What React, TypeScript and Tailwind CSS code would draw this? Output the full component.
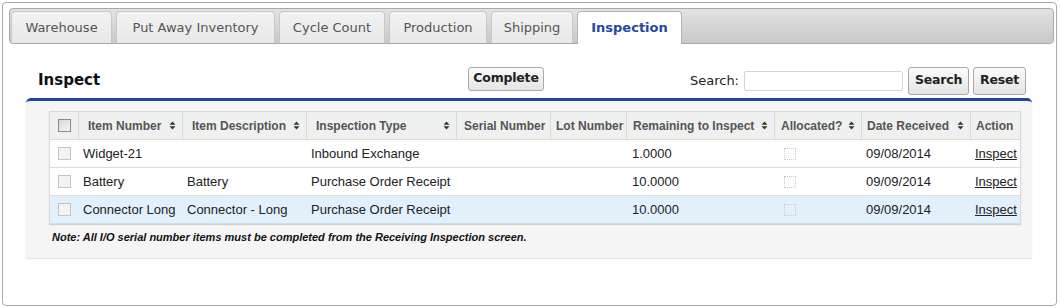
const tabs = [
  { label: "Warehouse", w: "w-[101px]" },
  { label: "Put Away Inventory", w: "w-[159px]" },
  { label: "Cycle Count", w: "w-[106px]" },
  { label: "Production", w: "w-[98px]" },
  { label: "Shipping", w: "w-[82px]" },
  { label: "Inspection", w: "w-[105px]", active: true },
];

const cols = [
  { label: "", w: "w-[29px]", pl: "" },
  { label: "Item Number", w: "w-[104px]", pl: "pl-[9px]", sort: true },
  { label: "Item Description", w: "w-[124px]", pl: "pl-[9px]", sort: true },
  { label: "Inspection Type", w: "w-[150px]", pl: "pl-[9px]", sort: true },
  { label: "Serial Number", w: "w-[94px]", pl: "pl-[7px]" },
  { label: "Lot Number", w: "w-[76px]", pl: "pl-[5px]" },
  { label: "Remaining to Inspect", w: "w-[148px]", pl: "pl-[6px]", sort: true },
  { label: "Allocated?", w: "w-[87px]", pl: "pl-[6px]", sort: true },
  { label: "Date Received", w: "w-[109px]", pl: "pl-[5px]", sort: true },
  { label: "Action", w: "w-[51px]", pl: "pl-[5px]" },
];

const rows = [
  { item: "Widget-21", desc: "", type: "Inbound Exchange", remaining: "1.0000", date: "09/08/2014" },
  { item: "Battery", desc: "Battery", type: "Purchase Order Receipt", remaining: "10.0000", date: "09/09/2014" },
  { item: "Connector Long", desc: "Connector - Long", type: "Purchase Order Receipt", remaining: "10.0000", date: "09/09/2014", hi: true },
];

function SortIcon() {
  return (
    <svg width="7" height="9" viewBox="0 0 7 9" className="shrink-0">
      <path d="M3.5 0.5 L6.5 3.8 L0.5 3.8 Z" fill="#333" />
      <path d="M3.5 8.5 L6.5 5.2 L0.5 5.2 Z" fill="#333" />
    </svg>
  );
}

function Check({ head }: { head?: boolean }) {
  return (
    <div
      className={
        head
          ? "w-[13px] h-[13px] border border-[#8a8a8a] bg-gradient-to-br from-[#d8d8d8] to-[#f6f6f6]"
          : "w-[13px] h-[13px] border border-[#c4c4c4] bg-[#f3f3f3]"
      }
    />
  );
}

function Btn({ children, w }: { children: string; w: string }) {
  return (
    <button
      className={`${w} h-[28px] border border-[#a9a9a9] rounded-[3px] bg-gradient-to-b from-[#fbfbfb] to-[#e4e4e4] text-[12.5px] font-bold text-[#222] tracking-[-0.2px]`}
    >
      {children}
    </button>
  );
}

export default function App() {
  return (
    <div className="w-[1060px] h-[308px] bg-white pt-[2px] pl-[2px] font-['DejaVu_Sans',sans-serif]">
      <div className="w-[1055px] h-[304px] border border-[#aaaaaa] rounded-[4px] pt-[5px] pl-[6px] pr-[2px]">
        {/* tab bar */}
        <div className="w-[1045px] h-[36px] border border-[#a9a9a9] rounded-[4px] bg-gradient-to-b from-[#e3e3e3] to-[#c8c8c8] flex items-end gap-[4px] pl-[1px]">
          {tabs.map((t) =>
            t.active ? (
              <div
                key={t.label}
                className={`${t.w} h-[33px] -mb-[1px] rounded-t-[4px] border border-b-0 border-[#b5b5b5] bg-white flex items-center justify-center text-[13px] font-bold text-[#2447a3]`}
              >
                {t.label}
              </div>
            ) : (
              <div
                key={t.label}
                className={`${t.w} h-[32px] rounded-t-[4px] border border-b-0 border-[#c9c9c9] bg-gradient-to-b from-[#f2f2f2] to-[#e8e8e8] flex items-center justify-center text-[13px] text-[#555]`}
              >
                {t.label}
              </div>
            )
          )}
        </div>

        {/* header row */}
        <div className="ml-[17px] w-[1006px] h-[32px] mt-[20px] mb-[2px] flex items-center">
          <div className="w-[442px] pl-[12px] text-[15px] font-bold text-[#111]">Inspect</div>
          <button className="w-[76px] h-[24px] -mt-[3px] border border-[#a9a9a9] rounded-[3px] bg-gradient-to-b from-[#fbfbfb] to-[#e4e4e4] text-[12.5px] font-bold text-[#222] tracking-[-0.2px]">
            Complete
          </button>
          <div className="ml-auto flex items-center gap-[4px] pr-[6px] mt-[1px]">
            <span className="text-[13px] text-[#222] mr-[1px]">Search:</span>
            <div className="w-[159px] h-[20px] border border-[#d4d4d4] bg-white rounded-[2px] mr-[1px]" />
            <Btn w="w-[61px]">Search</Btn>
            <Btn w="w-[53px]">Reset</Btn>
          </div>
        </div>

        {/* panel */}
        <div className="ml-[17px] w-[1006px] h-[160px] rounded-t-[5px] border-t-[3px] border-[#2146a6] bg-[#f5f5f5] shadow-[0_1px_1px_rgba(0,0,0,0.12)] pt-[10px] pl-[23px] font-['Liberation_Sans',Arial,sans-serif]">
          <div className="w-[972px] border border-[#dadada] border-b-0 shadow-[0_1px_1px_rgba(0,0,0,0.15)]">
            <div className="flex h-[28px] bg-[#eff0f0] border-b border-[#e0dbc4]">
              {cols.map((c, i) => (
                <div
                  key={i}
                  className={`${c.w} shrink-0 flex items-center ${i === 0 ? "justify-center" : `${c.pl} pr-[6px] justify-between`} ${i < cols.length - 1 ? "border-r border-[#dadada]" : ""} text-[12px] font-bold text-[#555] whitespace-nowrap`}
                >
                  {i === 0 ? <Check head /> : <span>{c.label}</span>}
                  {c.sort && <SortIcon />}
                </div>
              ))}
            </div>
            {rows.map((r, i) => (
              <div
                key={i}
                className={`flex h-[28px] border-b ${r.hi ? "bg-[#e1f0fb] border-[#d6dde2]" : "bg-white border-[#e2ddc8]"} text-[13px] text-[#222] whitespace-nowrap`}
              >
                <div className="w-[29px] shrink-0 flex items-center justify-center">
                  <Check />
                </div>
                <div className="w-[104px] shrink-0 flex items-center pl-[4px]">{r.item}</div>
                <div className="w-[124px] shrink-0 flex items-center pl-[4px]">{r.desc}</div>
                <div className="w-[150px] shrink-0 flex items-center pl-[4px]">{r.type}</div>
                <div className="w-[94px] shrink-0" />
                <div className="w-[76px] shrink-0" />
                <div className="w-[148px] shrink-0 flex items-center pl-[5px]">{r.remaining}</div>
                <div className="w-[87px] shrink-0 flex items-center pl-[9px]">
                  <div className="w-[12px] h-[12px] border border-dotted border-[#c8c8c8]" />
                </div>
                <div className="w-[109px] shrink-0 flex items-center pl-[4px]">{r.date}</div>
                <div className="w-[51px] shrink-0 flex items-center pl-[4px]">
                  <a href="#" className="underline text-[#222]">Inspect</a>
                </div>
              </div>
            ))}
          </div>
          <div className="mt-[5px] pl-[3px] text-[11px] font-bold italic text-[#111]">
            Note: All I/O serial number items must be completed from the Receiving Inspection screen.
          </div>
        </div>
      </div>
    </div>
  );
}
